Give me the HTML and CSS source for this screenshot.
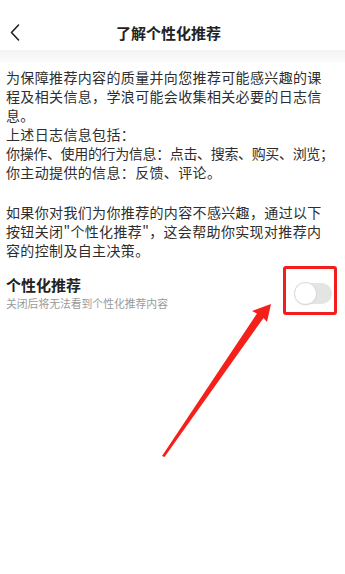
FILE: index.html
```html
<!DOCTYPE html>
<html lang="zh-CN">
<head>
<meta charset="utf-8">
<title>了解个性化推荐</title>
<link rel="stylesheet" href="styles.css">
</head>
<body>
<div class="page">
  <header class="topbar">
    <span class="back">
      <svg width="10" height="17" viewBox="0 0 10 17"><path d="M8.5 1 L1.5 8.5 L8.5 16" fill="none" stroke="#222" stroke-width="1.6" stroke-linecap="round" stroke-linejoin="round"/></svg>
    </span>
    <h1 class="title">了解个性化推荐</h1>
  </header>
  <div class="band"></div>
  <main class="content">
    <p class="text">为保障推荐内容的质量并向您推荐可能感兴趣的课<br>程及相关信息，学浪可能会收集相关必要的日志信<br>息。<br>上述日志信息包括：<br><span class="tight">你操作、使用的行为信息：点击、搜索、购买、浏览；</span><br>你主动提供的信息：反馈、评论。</p>
    <p class="text gap">如果你对我们为你推荐的内容不感兴趣，通过以下<br>按钮关闭"个性化推荐"，这会帮助你实现对推荐内<br>容的控制及自主决策。</p>
    <div class="setting">
      <div class="setting-text">
        <div class="setting-title">个性化推荐</div>
        <div class="setting-desc">关闭后将无法看到个性化推荐内容</div>
      </div>
      <div class="highlight">
        <div class="toggle"><span class="knob"></span></div>
      </div>
    </div>
  </main>
  <svg class="arrow" width="345" height="574" viewBox="0 0 345 574">
    <polygon points="271,304 252,311 257,313.5 162,456 164.5,457 263.5,318 267,322" fill="#f5201a"/>
  </svg>
</div>
</body>
</html>
```
FILE: styles.css
```css
* { box-sizing: border-box; }
html, body { margin: 0; padding: 0; background: #fff; }
body {
  font-family: "Noto Sans CJK SC", "Noto Sans", sans-serif;
  color: #333;
}
.page {
  position: relative;
  width: 345px;
  height: 574px;
  overflow: hidden;
}
.topbar {
  position: relative;
  height: 50px;
  padding-top: 16px;
  display: flex;
  align-items: flex-start;
  justify-content: center;
}
.back {
  position: absolute;
  left: 10px;
  top: 24px;
  width: 10px;
  height: 17px;
  display: block;
}
.back svg { display: block; }
.title {
  margin: 0 0 0 -8px;
  font-size: 15px;
  line-height: 34px;
  height: 34px;
  font-weight: 700;
  color: #222;
}
.band {
  height: 12px;
  background: linear-gradient(#f4f4f4, #fbfbfb);
}
.content {
  padding: 6px 8px 0 6px;
}
.text {
  margin: 0;
  font-size: 14px;
  line-height: 19px;
  letter-spacing: 0.35px;
  white-space: nowrap;
  color: #2e2e2e;
}
.tight { letter-spacing: -0.35px; }
.text.gap { margin-top: 21px; }
.setting {
  display: flex;
  justify-content: space-between;
  align-items: flex-start;
  margin-top: 6px;
}
.setting-text { padding-top: 9px; }
.setting-title {
  font-size: 15px;
  line-height: 20px;
  font-weight: 700;
  color: #222;
}
.setting-desc {
  font-size: 10.8px;
  line-height: 16px;
  color: #9a9a9a;
}
.highlight {
  width: 54px;
  height: 49px;
  border: 3px solid #f31d1d;
  border-radius: 3px;
  padding: 14px 2px 0 9px;
}
.toggle {
  width: 37px;
  height: 21px;
  border-radius: 11px;
  background: #e4e4e4;
  position: relative;
}
.knob {
  position: absolute;
  left: 0;
  top: 0;
  width: 21px;
  height: 21px;
  border-radius: 50%;
  background: #fff;
  box-shadow: 0 0 0 1px #dcdcdc, 0 1px 2px rgba(0,0,0,0.12);
}
.arrow {
  position: absolute;
  left: 0;
  top: 0;
  pointer-events: none;
}
```
